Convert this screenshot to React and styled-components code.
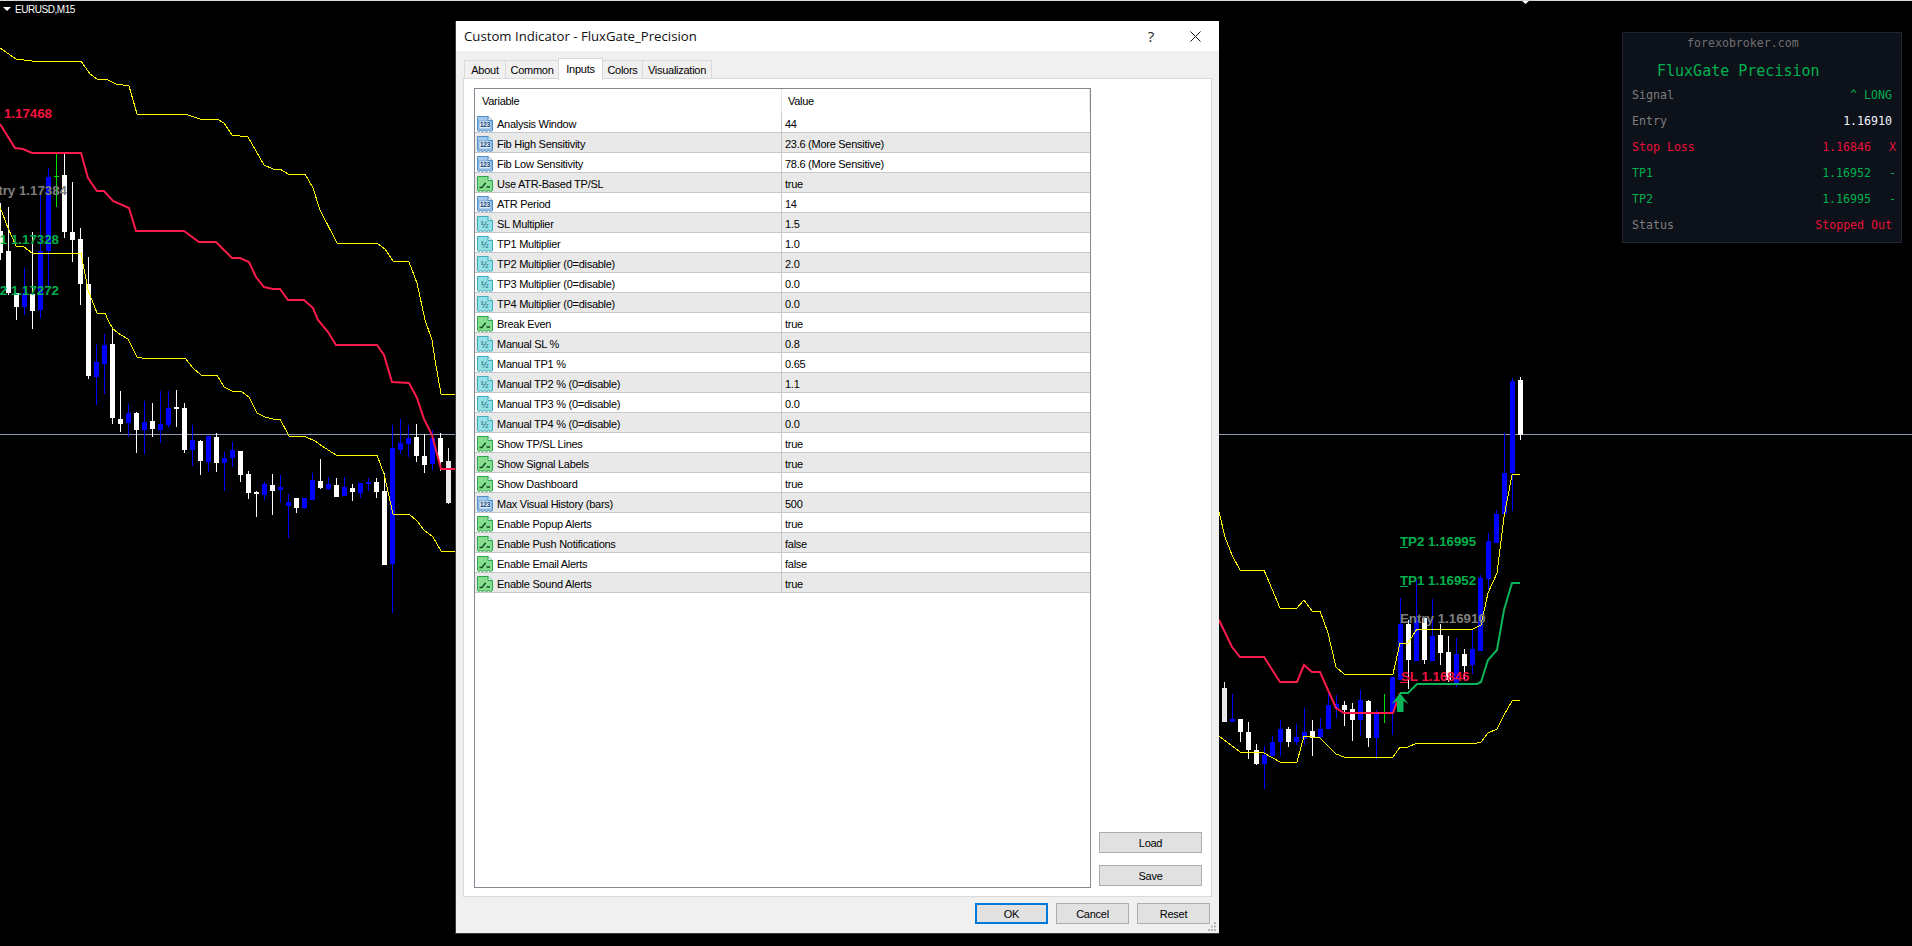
import styled, { createGlobalStyle } from "styled-components";

const GlobalStyle = createGlobalStyle`
    html, body {
        margin: 0;
        padding: 0;
        background: #000;
        overflow: hidden;
    }
    * { box-sizing: border-box; }
`;

// [center x, high, low, body top, body bottom, colour key]
const CANDLES = [
    [0.5, 203, 260, 231, 253, "w"], [8.5, 207, 295, 251, 293, "w"], [16.5, 293, 320, 293, 307, "w"],
    [24.5, 268, 315, 293, 307, "b"], [32.5, 232, 329, 294, 311, "w"], [40.5, 195, 318, 251, 310, "b"],
    [48.5, 168, 287, 177, 251, "b"], [64.5, 154, 238, 175, 232, "w"], [72.5, 182, 262, 232, 240, "w"],
    [80.5, 228, 305, 239, 284, "w"], [88.5, 257, 379, 284, 376, "w"], [96.5, 344, 405, 362, 377, "b"],
    [104.5, 334, 394, 345, 364, "b"], [112.5, 327, 424, 344, 418, "w"], [120.5, 391, 432, 419, 424, "w"],
    [128.5, 404, 437, 413, 423, "b"], [136.5, 412, 453, 413, 430, "w"], [144.5, 401, 454, 422, 430, "b"],
    [152.5, 403, 437, 421, 429, "w"], [160.5, 391, 443, 424, 430, "b"], [168.5, 391, 428, 408, 425, "b"],
    [176.5, 390, 427, 407, 409, "w"], [184.5, 403, 453, 408, 450, "w"], [192.5, 425, 466, 440, 450, "b"],
    [200.5, 440, 475, 441, 461, "w"], [208.5, 436, 472, 436, 462, "b"], [216.5, 433, 472, 437, 463, "w"],
    [224.5, 452, 491, 458, 463, "b"], [232.5, 442, 467, 450, 458, "b"], [240.5, 451, 482, 451, 475, "w"],
    [248.5, 471, 499, 474, 493, "w"], [256.5, 491, 517, 492, 494, "w"], [264.5, 482, 500, 484, 495, "b"],
    [272.5, 474, 515, 485, 491, "w"], [280.5, 475, 503, 487, 490, "b"], [288.5, 494, 538, 502, 506, "b"],
    [296.5, 498, 513, 498, 508, "w"], [304.5, 498, 509, 498, 508, "b"], [312.5, 473, 500, 480, 500, "b"],
    [320.5, 459, 489, 481, 488, "w"], [328.5, 477, 490, 484, 489, "b"], [336.5, 478, 497, 485, 497, "w"],
    [344.5, 477, 496, 487, 496, "b"], [352.5, 484, 501, 488, 492, "w"], [360.5, 483, 498, 483, 493, "b"],
    [368.5, 478, 491, 482, 484, "b"], [376.5, 478, 498, 482, 492, "w"], [384.5, 473, 565, 491, 565, "w"],
    [392.5, 425, 613, 448, 564, "b"], [400.5, 419, 454, 443, 450, "b"], [408.5, 425, 457, 438, 444, "b"],
    [416.5, 424, 462, 437, 456, "w"], [424.5, 434, 473, 456, 465, "w"], [432.5, 430, 470, 438, 464, "b"],
    [440.5, 433, 471, 438, 462, "w"], [448.5, 448, 504, 461, 503, "g"],
    [1224.5, 682, 722, 688, 722, "g"], [1232.5, 694, 722, 719, 722, "b"], [1240.5, 719, 742, 719, 732, "w"],
    [1248.5, 722, 759, 732, 750, "w"], [1256.5, 744, 765, 750, 764, "w"], [1264.5, 746, 789, 755, 764, "b"],
    [1272.5, 736, 756, 742, 756, "b"], [1280.5, 720, 756, 729, 742, "b"], [1288.5, 727, 747, 729, 742, "w"],
    [1296.5, 724, 745, 737, 742, "b"], [1304.5, 708, 745, 732, 739, "b"], [1312.5, 720, 756, 731, 738, "w"],
    [1320.5, 718, 738, 729, 737, "b"], [1328.5, 694, 729, 705, 729, "b"], [1336.5, 695, 718, 704, 708, "b"],
    [1344.5, 701, 726, 705, 710, "w"], [1352.5, 703, 741, 709, 720, "w"], [1360.5, 690, 736, 700, 720, "b"],
    [1368.5, 700, 747, 701, 738, "w"], [1376.5, 710, 759, 714, 738, "b"], [1392.5, 677, 735, 677, 712, "b"],
    [1400.5, 598, 680, 624, 680, "b"], [1408.5, 620, 689, 624, 660, "w"], [1416.5, 580, 661, 620, 661, "b"],
    [1424.5, 617, 664, 618, 660, "w"], [1432.5, 599, 661, 636, 661, "b"], [1440.5, 624, 665, 635, 653, "w"],
    [1448.5, 636, 682, 652, 680, "w"], [1456.5, 638, 687, 654, 684, "b"], [1464.5, 649, 680, 654, 666, "w"],
    [1472.5, 629, 674, 649, 665, "b"], [1480.5, 575, 651, 578, 651, "b"], [1488.5, 533, 590, 541, 579, "b"],
    [1496.5, 510, 543, 514, 543, "b"], [1504.5, 433, 514, 473, 514, "b"], [1512.5, 378, 511, 381, 473, "b"],
    [1520.5, 377, 440, 380, 435, "w"],
];

const CANDLE_COLORS = { w: "#ffffff", b: "#0000ff", g: "#e8e8e8" };

// line points are read off 3x crops, so they get scaled back and snapped to pixels here
const snap = (x, y) => `${Math.round(x)},${Math.round(y)}`;
const leftPts = (top, bottom) => [
    ...top.map(([x, y]) => snap(x / 3, y / 3)),
    ...bottom.map(([x, y]) => snap(x / 3, 320 + y / 3)),
].join(" ");
const rightPts = (pts) => pts.map(([x, y]) => snap(1200 + x / 3, 360 + y / 3)).join(" ");

const LEFT_TOP = leftPts(
    [[0,143],[48,177],[95,184],[242,184],[270,222],[290,238],[318,238],[348,253],[386,259],[410,343],[555,343],[600,357],[652,357],[672,368],[697,406],[745,410],[793,495],[818,508],[840,508],[865,523],[915,523],[940,565],[960,630],[1010,730],[1130,730],[1155,748],[1178,784],[1226,787],[1250,850]],
    [[1275,0],[1297,60],[1305,120],[1322,223],[1366,223]]
);
const LEFT_MID = leftPts(
    [[0,372],[46,445],[70,447],[95,459],[242,459],[265,535],[290,572],[312,572],[338,602],[386,625],[408,692],[552,692],[598,726],[649,726],[697,773],[720,773],[746,787],[768,830],[793,860],[818,867],[841,867],[865,900],[913,900],[940,925]],
    [[955,0],[985,35],[1007,75],[1130,75],[1152,105],[1177,185],[1226,188],[1250,235],[1272,297],[1297,345],[1322,447],[1366,447]]
);
const LEFT_BOTTOM = leftPts(
    [[0,620],[25,685],[48,738],[72,740],[97,760],[242,760],[265,870],[290,940],[316,940]],
    [[325,0],[338,27],[362,45],[385,57],[410,112],[425,115],[555,115],[580,145],[602,166],[650,166],[672,202],[697,214],[722,214],[746,232],[770,280],[794,292],[818,298],[841,298],[866,349],[918,350],[945,362],[965,378],[1008,406],[1130,406],[1152,462],[1178,583],[1226,583],[1250,603],[1272,630],[1298,650],[1322,694],[1366,694]]
);
const RIGHT_TOP = rightPts([[58,457],[75,530],[97,585],[121,631],[193,631],[241,745],[290,745],[313,721],[337,754],[361,754],[385,820],[409,920],[432,943],[578,943],[601,850],[625,850],[650,808],[820,808],[842,796],[865,700],[890,640],[913,470],[937,345],[961,343]]);
const RIGHT_RED = rightPts([[58,780],[97,860],[120,890],[193,890],[241,966],[290,966],[313,916],[337,935],[361,935],[385,990],[409,1045],[432,1058],[578,1058],[600,1000]]);
const RIGHT_GREEN = rightPts([[600,1000],[625,998],[650,971],[830,971],[842,965],[865,900],[890,870],[913,750],[937,668],[961,668]]);
const RIGHT_BOTTOM = rightPts([[58,1128],[120,1177],[193,1180],[241,1207],[290,1207],[313,1127],[361,1135],[409,1183],[432,1190],[578,1190],[601,1162],[625,1162],[650,1150],[830,1150],[842,1147],[865,1118],[890,1107],[913,1065],[937,1022],[961,1021]]);

const GREEN = "#00b04f";
const RED = "#f5123f";
const GREY = "#7f7f7f";

const CHART_LABELS = [
    { text: "SL 1.17468", x: 52, y: 118, color: RED, anchor: "end" },
    { text: "Entry 1.17384", x: 67, y: 195, color: GREY, anchor: "end" },
    { text: "TP1 1.17328", x: 59, y: 244, color: GREEN, anchor: "end" },
    { text: "TP2 1.17272", x: 59, y: 295, color: GREEN, anchor: "end" },
    { text: "TP2 1.16995", x: 1400, y: 546, color: GREEN, anchor: "start" },
    { text: "TP1 1.16952", x: 1400, y: 585, color: GREEN, anchor: "start" },
    { text: "Entry 1.16910", x: 1400, y: 623, color: GREY, anchor: "start" },
    { text: "SL 1.16846", x: 1401, y: 681, color: RED, anchor: "start" },
];

const INPUTS = [
    ["num", "Analysis Window", "44"],
    ["num", "Fib High Sensitivity", "23.6 (More Sensitive)"],
    ["num", "Fib Low Sensitivity", "78.6 (More Sensitive)"],
    ["bool", "Use ATR-Based TP/SL", "true"],
    ["num", "ATR Period", "14"],
    ["dbl", "SL Multiplier", "1.5"],
    ["dbl", "TP1 Multiplier", "1.0"],
    ["dbl", "TP2 Multiplier (0=disable)", "2.0"],
    ["dbl", "TP3 Multiplier (0=disable)", "0.0"],
    ["dbl", "TP4 Multiplier (0=disable)", "0.0"],
    ["bool", "Break Even", "true"],
    ["dbl", "Manual SL %", "0.8"],
    ["dbl", "Manual TP1 %", "0.65"],
    ["dbl", "Manual TP2 % (0=disable)", "1.1"],
    ["dbl", "Manual TP3 % (0=disable)", "0.0"],
    ["dbl", "Manual TP4 % (0=disable)", "0.0"],
    ["bool", "Show TP/SL Lines", "true"],
    ["bool", "Show Signal Labels", "true"],
    ["bool", "Show Dashboard", "true"],
    ["num", "Max Visual History (bars)", "500"],
    ["bool", "Enable Popup Alerts", "true"],
    ["bool", "Enable Push Notifications", "false"],
    ["bool", "Enable Email Alerts", "false"],
    ["bool", "Enable Sound Alerts", "true"],
];

const TABS = [
    { name: "About", width: 42 },
    { name: "Common", width: 54 },
    { name: "Inputs", width: 45 },
    { name: "Colors", width: 41 },
    { name: "Visualization", width: 70 },
];

const DASH_ROWS = [
    { label: "Signal", value: "^ LONG", color: GREEN },
    { label: "Entry", value: "1.16910", color: "#f2f6ff" },
    { label: "Stop Loss", value: "1.16846", mark: "X", color: "#e8103a", labelColor: "#e8103a" },
    { label: "TP1", value: "1.16952", mark: "-", color: GREEN, labelColor: GREEN },
    { label: "TP2", value: "1.16995", mark: "-", color: GREEN, labelColor: GREEN },
    { label: "Status", value: "Stopped Out", color: "#e8103a" },
];

const ICON_STYLES = {
    num: { fill: "#a3c8ec", edge: "#4f8ec9" },
    dbl: { fill: "#93e0e6", edge: "#3fabb8" },
    bool: { fill: "#86dc8f", edge: "#2ea44f" },
};

const TypeIcon = ({ type }) => {
    const { fill, edge } = ICON_STYLES[type];
    return (
        <svg width="16" height="16" viewBox="0 0 16 16">
            <path
                d="M.5 .5 H11 L15.5 4.5 V14.5 L13.5 15.5 L11.5 14.5 L9.5 15.5 L7.5 14.5 L5.5 15.5 L3.5 14.5 L1.5 15.5 L.5 14.5 Z"
                fill={fill}
                stroke={edge}
            />
            <path d="M11 .5 V4.5 H15.5" fill="#e8f4fb" stroke={edge} />
            {type === "num" && (
                <>
                    <rect x="2" y="5" width="12" height="8" fill="#dcebf9" stroke="#5b8fc4" strokeWidth=".6" />
                    <text x="8" y="11.4" textAnchor="middle" fontSize="6.4" fontWeight="700" fontFamily="'Liberation Sans', sans-serif" fill="#123a78">123</text>
                </>
            )}
            {type === "dbl" && (
                <text x="7.5" y="11.8" textAnchor="middle" fontSize="9" fontFamily="'Liberation Sans', sans-serif" fill="#155a68">½</text>
            )}
            {type === "bool" && (
                <path d="M2.5 11.5 H5 L8 7.5 H9 M9.5 11 H13" fill="none" stroke="#0c4d1e" strokeWidth="1.3" />
            )}
        </svg>
    );
};

const Chart = () => (
    <ChartSvg width="1912" height="946" viewBox="0 0 1912 946">
        <rect x="0" y="434" width="1912" height="1" fill="#8a9ab3" />
        <path d="M1521 0 h9 l-4.5 4 z" fill="#fff" />
        {CANDLES.map(([cx, hi, lo, top, bot, kind]) => (
            <g key={cx} fill={CANDLE_COLORS[kind]} shapeRendering="crispEdges">
                <rect x={cx - 0.5} y={hi} width="1" height={lo - hi} />
                <rect x={cx - 2.5} y={top} width="5" height={bot - top} />
            </g>
        ))}
        {/* green doji bars */}
        <path d="M56.5 154 V207 M54 176.5 h5 M1384.5 694 V723" stroke="#00e000" strokeWidth="1" fill="none" />
        <TrendLine points={LEFT_TOP} />
        <TrendLine points={LEFT_BOTTOM} />
        <TrendLine points={RIGHT_TOP} />
        <TrendLine points={RIGHT_BOTTOM} />
        <StopLine points={LEFT_MID} />
        <StopLine points={RIGHT_RED} />
        <StopLine points={RIGHT_GREEN} $color="#0cb45a" />
        <path d="M1400 693 L1408.5 704 L1403.5 701 V712 H1397 V701 L1391.5 704 Z" fill="#0cb45a" />
        <path d="M1400 547.5 h8 M1400 586.5 h8" stroke={GREEN} />
        <path d="M1400 682.5 h8" stroke={RED} />
        {CHART_LABELS.map((l) => (
            <ChartLabel key={l.text} x={l.x} y={l.y} fill={l.color} textAnchor={l.anchor}>{l.text}</ChartLabel>
        ))}
    </ChartSvg>
);

const Dashboard = () => (
    <DashPanel>
        <DashSite>forexobroker.com</DashSite>
        <DashTitle>FluxGate Precision</DashTitle>
        {DASH_ROWS.map((r) => (
            <DashRow key={r.label}>
                <DashLabel $color={r.labelColor}>{r.label}</DashLabel>
                <DashValue $color={r.color}>{r.value}</DashValue>
                {r.mark && <DashMark $color={r.color}>{r.mark}</DashMark>}
            </DashRow>
        ))}
    </DashPanel>
);

const App = () => (
    <Page>
        <GlobalStyle />
        <Chart />
        <SymbolTag>
            <SymbolArrow />
            EURUSD,M15
        </SymbolTag>
        <Dashboard />
        <Dialog>
            <TitleBar>
                <TitleText>Custom Indicator - FluxGate_Precision</TitleText>
                <HelpMark>?</HelpMark>
                <CloseMark width="11" height="11" viewBox="0 0 11 11">
                    <path d="M.5 .5 L10.5 10.5 M10.5 .5 L.5 10.5" stroke="#111" fill="none" />
                </CloseMark>
            </TitleBar>
            <DialogBody>
                <TabStrip>
                    {TABS.map((t) => (
                        <Tab key={t.name} $w={t.width} $active={t.name === "Inputs"}>{t.name}</Tab>
                    ))}
                </TabStrip>
                <TabPanel>
                    <InputList>
                        <ListHeader>
                            <HeaderCell $w={307}>Variable</HeaderCell>
                            <HeaderCell>Value</HeaderCell>
                        </ListHeader>
                        {INPUTS.map(([type, name, value], i) => (
                            <InputRow key={name} $alt={i % 2 === 1}>
                                <NameCell>
                                    <TypeIcon type={type} />
                                    {name}
                                </NameCell>
                                <ValueCell>{value}</ValueCell>
                            </InputRow>
                        ))}
                    </InputList>
                    <SideButtons>
                        <SideButton>Load</SideButton>
                        <SideButton>Save</SideButton>
                    </SideButtons>
                </TabPanel>
                <Footer>
                    <FootButton $primary>OK</FootButton>
                    <FootButton>Cancel</FootButton>
                    <FootButton>Reset</FootButton>
                    <SizeGrip width="8" height="9" viewBox="0 0 8 9">
                        <path d="M6 0h2v2H6z M3 3.5h2v2H3z M6 3.5h2v2H6z M0 7h2v2H0z M3 7h2v2H3z M6 7h2v2H6z" fill="#b4b4b4" />
                    </SizeGrip>
                </Footer>
            </DialogBody>
        </Dialog>
    </Page>
);

export default App;

const Page = styled.div`
    position: relative;
    width: 1912px;
    height: 946px;
    overflow: hidden;
    background: #000;
    border-top: 1px solid #d8d8d8;
`;

const ChartSvg = styled.svg`
    position: absolute;
    left: 0;
    top: -1px;
    display: block;
`;

const TrendLine = styled.polyline`
    fill: none;
    stroke: #ffff00;
    stroke-width: 1;
    shape-rendering: crispEdges;
`;

const StopLine = styled.polyline`
    fill: none;
    stroke: ${(p) => p.$color || "#fa1a4c"};
    stroke-width: 2;
`;

const ChartLabel = styled.text`
    font-family: "Liberation Sans", Arial, sans-serif;
    font-weight: 700;
    font-size: 13.3px;
`;

const SymbolTag = styled.div`
    position: absolute;
    left: 3px;
    top: 1px;
    height: 14px;
    display: flex;
    align-items: center;
    gap: 4px;
    color: #fff;
    font: 10px "Liberation Sans", Arial, sans-serif;
    letter-spacing: -0.45px;
`;

const SymbolArrow = styled.span`
    width: 0;
    height: 0;
    border-left: 4px solid transparent;
    border-right: 4px solid transparent;
    border-top: 4px solid #fff;
`;

const DashPanel = styled.div`
    position: absolute;
    left: 1622px;
    top: 31px;
    width: 280px;
    height: 211px;
    padding: 0 9px;
    background: #0d111a;
    border: 1px solid #20242f;
    font-family: "DejaVu Sans Mono", monospace;
    font-size: 11.6px;
`;

const DashSite = styled.div`
    height: 20px;
    line-height: 20px;
    padding-left: 55px;
    color: #6f6f6f;
`;

const DashTitle = styled.div`
    height: 27px;
    margin-top: 2px;
    padding: 4px 0 0 25px;
    line-height: 24px;
    font-size: 15px;
    color: ${GREEN};
`;

const DashRow = styled.div`
    height: 26px;
    display: flex;
    align-items: center;
    justify-content: flex-end;
`;

const DashLabel = styled.span`
    margin-right: auto;
    color: ${(p) => p.$color || "#7d7d7d"};
`;

const DashValue = styled.span`
    color: ${(p) => p.$color};
`;

const DashMark = styled.span`
    width: 25px;
    margin-right: -4px;
    text-align: right;
    color: ${(p) => p.$color};
`;

const Dialog = styled.div`
    position: absolute;
    left: 455px;
    top: 20px;
    width: 764px;
    height: 913px;
    display: flex;
    flex-direction: column;
    background: #f0f0f0;
    border-left: 1px solid #3a3a3a;
    border-bottom: 1px solid #3a3a3a;
    font: 11px "Liberation Sans", Arial, sans-serif;
    letter-spacing: -0.27px;
    color: #000;
`;

const TitleBar = styled.div`
    height: 30px;
    flex: none;
    display: flex;
    align-items: center;
    padding-left: 8px;
    background: #fff;
`;

const TitleText = styled.span`
    margin-right: auto;
    font: 13.2px "Open Sans", "Noto Sans", sans-serif;
    letter-spacing: 0;
    color: #111;
`;

const HelpMark = styled.span`
    font: 15px "Open Sans", sans-serif;
    margin-right: 36px;
    color: #222;
`;

const CloseMark = styled.svg`
    margin-right: 18px;
`;

const DialogBody = styled.div`
    flex: 1;
    display: flex;
    flex-direction: column;
    min-height: 0;
    padding: 7px 7px 0 7px;
`;

const TabStrip = styled.div`
    height: 21px;
    flex: none;
    display: flex;
    align-items: flex-end;
    padding-left: 2px;
    position: relative;
    z-index: 1;
`;

const Tab = styled.div`
    width: ${(p) => p.$w}px;
    height: ${(p) => (p.$active ? "22px" : "19px")};
    display: flex;
    align-items: center;
    justify-content: center;
    padding-bottom: ${(p) => (p.$active ? "2px" : "0")};
    margin-left: -1px;
    margin-bottom: ${(p) => (p.$active ? "-1px" : "0")};
    background: ${(p) => (p.$active ? "#fff" : "#f0f0f0")};
    border: 1px solid #d9d9d9;
    border-bottom: ${(p) => (p.$active ? "none" : "1px solid #d9d9d9")};
`;

const TabPanel = styled.div`
    height: 819px;
    flex: none;
    margin-top: -1px;
    display: flex;
    gap: 8px;
    padding: 9px 9px 8px 10px;
    background: #fff;
    border: 1px solid #d9d9d9;
`;

const InputList = styled.div`
    width: 617px;
    flex: none;
    background: #fff;
    border: 1px solid #828790;
`;

const ListHeader = styled.div`
    height: 24px;
    display: flex;
`;

const HeaderCell = styled.div`
    ${(p) => (p.$w ? `width: ${p.$w}px;` : "flex: 1;")}
    display: flex;
    align-items: center;
    padding-left: 6px;
    border-right: 1px solid #e5e5e5;

    &:first-child {
        padding-left: 7px;
    }
`;

const InputRow = styled.div`
    height: 20px;
    display: flex;
    background: ${(p) => (p.$alt ? "#e9e9e9" : "#fff")};
    border-bottom: 1px solid #c8c8c8;
`;

const NameCell = styled.div`
    width: 307px;
    flex: none;
    display: flex;
    align-items: center;
    gap: 4px;
    padding: 2px 0 0 2px;
    border-right: 1px solid #c8c8c8;
`;

const ValueCell = styled.div`
    flex: 1;
    display: flex;
    align-items: center;
    padding: 2px 0 0 3px;
`;

const SideButtons = styled.div`
    flex: 1;
    display: flex;
    flex-direction: column;
    justify-content: flex-end;
    gap: 12px;
    padding-bottom: 2px;
`;

const SideButton = styled.div`
    height: 21px;
    display: flex;
    align-items: center;
    justify-content: center;
    background: #e1e1e1;
    border: 1px solid #adadad;
`;

const Footer = styled.div`
    position: relative;
    flex: 1;
    display: flex;
    justify-content: flex-end;
    align-items: flex-start;
    gap: 8px;
    padding: 6px 2px 0 0;
`;

const FootButton = styled.div`
    width: 73px;
    height: 21px;
    display: flex;
    align-items: center;
    justify-content: center;
    background: #e1e1e1;
    border: ${(p) => (p.$primary ? "2px solid #0078d7" : "1px solid #adadad")};
`;

const SizeGrip = styled.svg`
    position: absolute;
    right: -4px;
    bottom: 2px;
`;
